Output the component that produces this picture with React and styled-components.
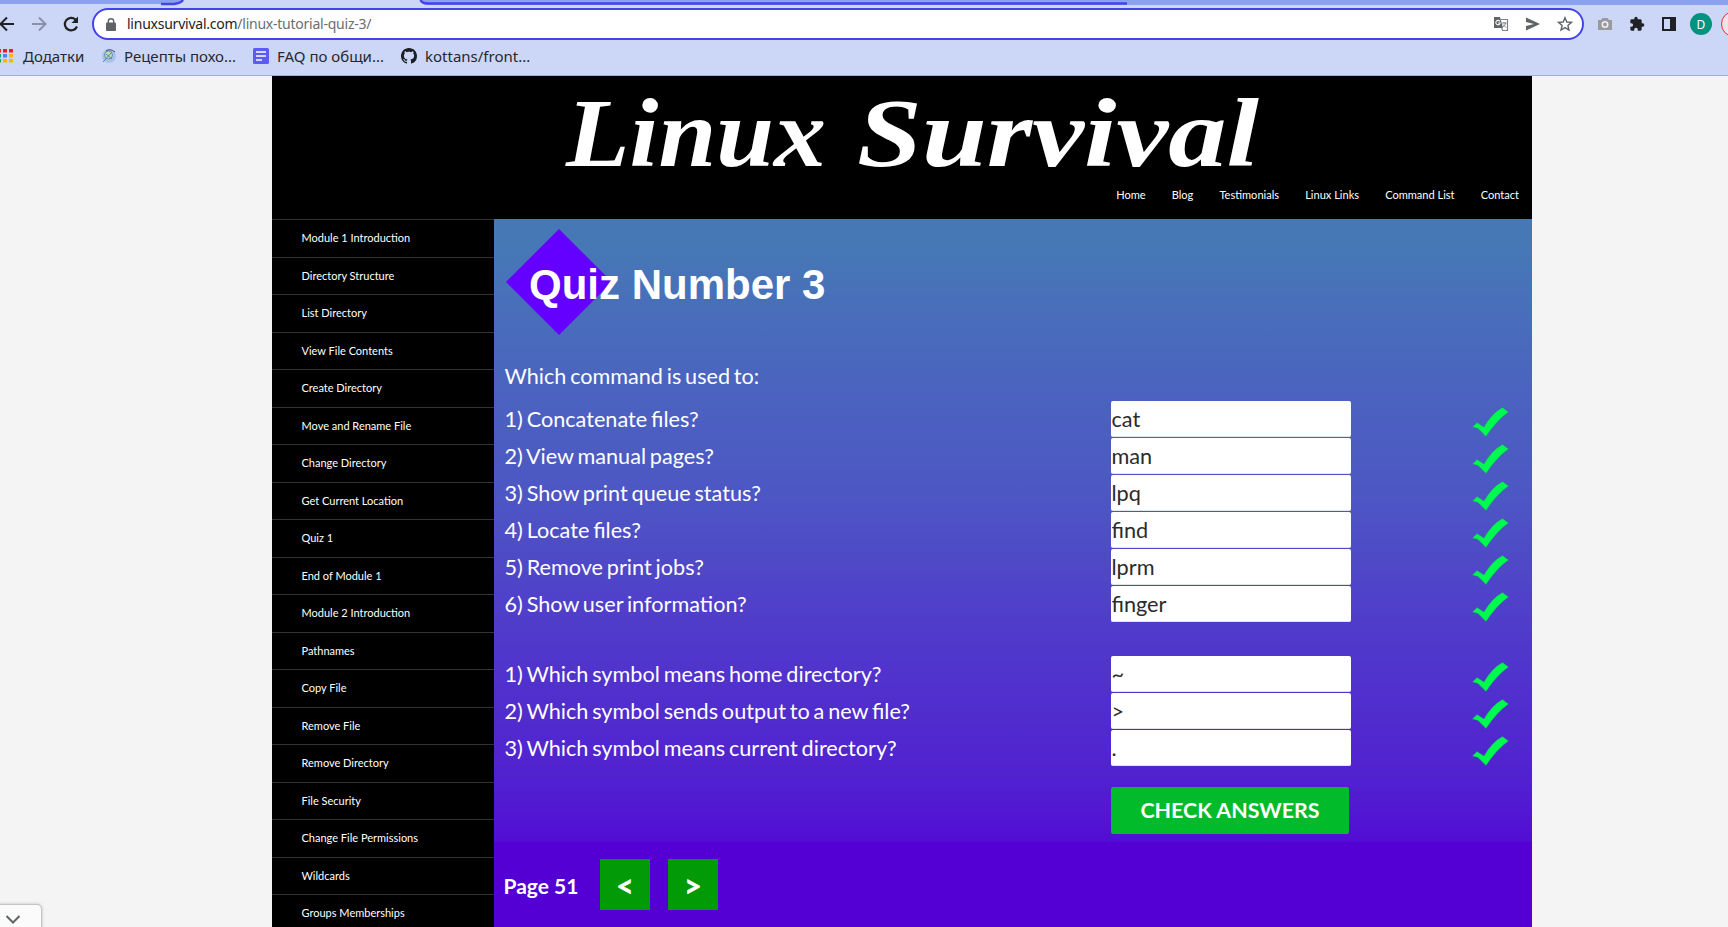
import React from "react";
import styled, { createGlobalStyle } from "styled-components";

const Global = createGlobalStyle`
  * { box-sizing: border-box; }
  html, body { margin: 0; height: 927px; overflow: hidden; background: #f4f4f4; }
  body { font-family: Lato, sans-serif; }
  svg { display: block; flex: none; }
`;
const Screen = styled.div`
  position: relative; width: 1728px; height: 927px; overflow: hidden;
  display: flex; flex-direction: column;
`;
const Chrome = styled.header`
  height: 76px; background: #ccd6f6; border-bottom: 1px solid #a3b0d6; flex: none;
  font-family: "Noto Sans", sans-serif;
`;
const TabStrip = styled.div`
  height: 8px; display: flex; align-items: flex-start;
`;
const Toolbar = styled.div`
  height: 32px; display: flex; align-items: center;
`;
const NavIcons = styled.div`
  width: 94px; display: flex; align-items: center; gap: 14px; margin-left: -2px; flex: none;
`;
const Omnibox = styled.div`
  width: 1492px; height: 32px; border: 2px solid #4543ea; border-radius: 16px; background: #fff;
  display: flex; align-items: center; padding: 0 9px 0 12px; flex: none;
`;
const Url = styled.div`
  margin-left: 11px; flex: 1; font-size: 14px; color: #1f2023; letter-spacing: -0.24px; padding-bottom: 1px;
  span { color: #6b6d72; }
`;
const OmniIcons = styled.div`display: flex; align-items: center; gap: 16px;`;
const Extensions = styled.div`
  display: flex; align-items: center; gap: 16px; margin-left: 13px;
`;
const Avatar = styled.div`
  width: 22px; height: 22px; border-radius: 50%; background: #009380; color: #fff; font-size: 12px;
  display: flex; align-items: center; justify-content: center; margin: 0 -3px; flex: none;
`;
const UpdatePill = styled.div`
  width: 40px; height: 26px; border: 1px solid #e0303a; border-radius: 13px; background: #f3dfe6;
  flex: none; margin-left: -4px;
`;
const Bookmarks = styled.div`
  height: 32px; display: flex; align-items: center; margin-left: -3px;
`;
const Bookmark = styled.div`
  display: flex; align-items: center; gap: ${p => p.$gap}px; width: ${p => p.$w}px; flex: none;
  font-size: 15px; color: #26282d; white-space: nowrap;
`;
const Site = styled.main`
  width: 1260px; margin-left: 272px; height: 851px; background: #000; flex: none;
`;
const Banner = styled.div`
  height: 143px; display: flex; flex-direction: column; justify-content: space-between;
`;
const Logo = styled.svg`margin: 0 0 -14px 280px;`;
const SiteNav = styled.nav`
  display: flex; justify-content: flex-end; gap: 26.1px; padding-right: 13px; height: 31px;
  font-size: 11.05px; line-height: 14px; color: #fff;
`;
const Columns = styled.div`display: flex; height: 708px;`;
const Sidebar = styled.aside`width: 222px; overflow: hidden; flex: none;`;
const SideItem = styled.div`
  height: 37.52px; border-top: 1px solid #333; padding-left: 29.5px; font-size: 11px;
  line-height: 35px; color: #fff;
`;
const Content = styled.section`
  width: 1038px; background: linear-gradient(#4678b6 0, #4678b6 26px, #4a66be 148px, #4d56c4 280px, #5039cb 420px, #5121d0 560px, #520ed3 622px);
`;
const Quiz = styled.div`height: 623px; padding: 10px 0 0 11px;`;
const TitleRow = styled.div`
  height: 106px; display: flex; align-items: center; margin-left: 1px;
`;
const Title = styled.h1`
  margin: 0 0 0 -83px; padding-top: 6px; font: bold 42px/48px "Liberation Sans", sans-serif; color: #fff;
  position: relative;
`;
const Prompt = styled.p`
  margin: 28px 0 0 -0.5px; height: 38px; line-height: 27px; font-size: 21.6px; word-spacing: -1.7px; color: #fff;
`;
const Group = styled.div`display: flex; flex-direction: column; gap: 1px; margin-bottom: 34px;`;
const Row = styled.div`
  height: 36px; display: grid; grid-template-columns: 606px 240px 36px; align-items: center;
  color: #fff;
  svg { margin: 6px 0 0 120.5px; }
`;
const Question = styled.span`
  font-size: 21.65px; word-spacing: -1.7px; line-height: 26px; margin-left: -0.5px;
`;
const Answer = styled.div`
  height: 36px; background: #fff; color: #2b2b2b; border: 1px solid #e3e3ea; border-width: 0 0 1px;
  border-radius: 2px; line-height: 36px; font-size: 21.7px; padding-left: 0.5px;
`;
const CheckButton = styled.button`
  display: block; width: 238px; height: 47px; margin: -13px 0 0 606px; border: 0; border-radius: 2px;
  background: #02bb2a; color: #fff; font: bold 21.4px Lato, sans-serif; padding: 0 0 2px;
`;
const Pager = styled.div`
  height: 85px; background: #5400d4; display: flex; align-items: flex-start; padding: 17px 0 0 9.5px;
  color: #fff; font-weight: bold; font-size: 21px;
`;
const PageLabel = styled.span`width: 96.5px; line-height: 54px;`;
const PageButton = styled.span`
  width: 50px; height: 51px; margin-right: 18px; background: #029a06; text-align: center;
  font-size: 30px; line-height: 52px; -webkit-text-stroke: 0.6px #fff;
`;
const ScrollTab = styled.div`
  position: absolute; left: -4px; top: 904px; width: 46px; height: 30px; background: #fbfbfb;
  border: 1px solid #c4c4c4; border-radius: 5px; box-shadow: 0 0 3px #bbb;
  display: flex; padding: 9px 0 0 8px;
`;

const ArrowIcon = ({ c, flip }) => (
  <svg width="18" height="18" viewBox="0 0 18 18" fill="none" stroke={c} strokeWidth="2"
    transform={flip ? "scale(-1 1)" : undefined}>
    <path d="M16 9H3M9 2.5 2.5 9 9 15.5" />
  </svg>
);
const Check = () => (
  <svg width="37" height="30" viewBox="0 0 37 30">
    <path d="M.5 20 5 15.500 12 20Q20 6 30.500.5L36.500 5Q25 13 14 29.500L6 21.500Z" fill="#00fb50" stroke="#1c9a62" strokeWidth=".5" />
  </svg>
);

const modules = ["Module 1 Introduction", "Directory Structure", "List Directory", "View File Contents",
  "Create Directory", "Move and Rename File", "Change Directory", "Get Current Location", "Quiz 1",
  "End of Module 1", "Module 2 Introduction", "Pathnames", "Copy File", "Remove File", "Remove Directory",
  "File Security", "Change File Permissions", "Wildcards", "Groups Memberships"];
const commands = [["1) Concatenate files?", "cat"], ["2) View manual pages?", "man"],
  ["3) Show print queue status?", "lpq"], ["4) Locate files?", "find"], ["5) Remove print jobs?", "lprm"],
  ["6) Show user information?", "finger"]];
const symbols = [["1) Which symbol means home directory?", "~"],
  ["2) Which symbol sends output to a new file?", ">"], ["3) Which symbol means current directory?", "."]];

const Questions = ({ items }) => (
  <Group>
    {items.map(([q, a]) => <Row key={q}><Question>{q}</Question><Answer>{a}</Answer><Check /></Row>)}
  </Group>
);

export default function App() {
  return (
    <Screen>
      <Global />
      <Chrome>
        <TabStrip>
          <svg width="1728" height="8" viewBox="0 0 1728 8">
            <path d="M0 0H182Q180 4 174 4H0ZM421 0H1728V5H428Q423 5 421 0Z" fill="#8aa2ee" />
            <path d="M161 4H174Q181 3 183 0M420.500 0Q422 3.500 428 3.500H1127" fill="none" stroke="#4543ea" strokeWidth="2.500" />
          </svg>
        </TabStrip>
        <Toolbar>
          <NavIcons>
            <ArrowIcon c="#202124" />
            <ArrowIcon c="#8a90a8" flip />
            <svg width="18" height="18" viewBox="0 0 18 18" fill="none" stroke="#202124" strokeWidth="2.200">
              <path d="M15 11.500A6.300 6.300 0 1 1 13.500 4.500L15 6" /><path d="M16 1.500V8H9.500Z" fill="#202124" stroke="none" />
            </svg>
          </NavIcons>
          <Omnibox>
            <svg width="10" height="13" viewBox="0 0 10 13">
              <rect x="0" y="4.500" width="10" height="8.500" rx="1" fill="#5f6368" />
              <path d="M2.300 5V3.200A2.700 2.500 0 0 1 7.700 3.200V5" fill="none" stroke="#5f6368" strokeWidth="1.400" />
            </svg>
            <Url>linuxsurvival.com<span>/linux-tutorial-quiz-3/</span></Url>
            <OmniIcons>
              <svg width="16" height="16" viewBox="0 0 16 16">
                <path d="M1 1H7L10 12H1Z" fill="#5f6368" />
                <path d="M8 3.500H14.500V14.500H9.500L8.800 12" fill="none" stroke="#7d8085" strokeWidth="1.200" />
                <path d="M9 7H13.500M11.200 6V7M12.800 7Q12 10 9.500 11M10 8.500 13 11.500" stroke="#7d8085" fill="none" />
                <path d="M6.800 5.300A2.200 2.200 0 1 0 7.200 7H5.200" stroke="#fff" fill="none" strokeWidth="1.100" />
              </svg>
              <svg width="16" height="16" viewBox="0 0 16 16"><path d="M1 1.500 15 8 1 14.500V10L9 8 1 6Z" fill="#5f6368" /></svg>
              <svg width="16" height="16" viewBox="0 0 16 16"><path d="M8 1.700 9.800 6 14.500 6.400 10.900 9.500 12 14.100 8 11.600 4 14.100 5.100 9.500 1.500 6.400 6.200 6Z" fill="none" stroke="#5f6368" strokeWidth="1.400" /></svg>
            </OmniIcons>
          </Omnibox>
          <Extensions>
            <svg width="16" height="16" viewBox="0 0 16 16"><path d="M1 4H4L5.500 2H10.500L12 4H15V14H1Z" fill="#9a9a9a" /><circle cx="8" cy="8.500" r="2.700" fill="none" stroke="#eef" strokeWidth="1.600" /></svg>
            <svg width="16" height="16" viewBox="0 0 24 24"><path d="M20.500 11H19V7a2 2 0 0 0-2-2h-4V3.500a2.500 2.500 0 0 0-5 0V5H4a2 2 0 0 0-2 2v3.800h1.500a2.700 2.700 0 0 1 0 5.400H2V20a2 2 0 0 0 2 2h3.800v-1.500a2.700 2.700 0 0 1 5.400 0V22H17a2 2 0 0 0 2-2v-4h1.500a2.500 2.500 0 0 0 0-5Z" fill="#202124" /></svg>
            <svg width="16" height="16" viewBox="0 0 16 16"><path d="M1 1H15V15H1ZM3 3V13H9V3Z" fillRule="evenodd" fill="#202124" /></svg>
            <Avatar>D</Avatar>
            <UpdatePill />
          </Extensions>
        </Toolbar>
        <Bookmarks>
          <Bookmark $w={104} $gap={10}>
            <svg width="16" height="16" viewBox="0 0 16 16">
              {["#f01c24", "#f01c24", "#f01c24", "#0fa958", "#4285f4", "#fbb605", "#0fa958", "#fbb605", "#fbb605"].map((c, i) => (
                <rect key={i} x={(i % 3) * 6} y={1 + Math.floor(i / 3) * 5} width="4" height="3.500" fill={c} />))}
            </svg>
            Додатки
          </Bookmark>
          <Bookmark $w={152} $gap={7}>
            <svg width="16" height="16" viewBox="0 0 16 16"><circle cx="8" cy="8" r="7" fill="#a9c3e8" /><circle cx="7.500" cy="7" r="4" fill="#c6dfa0" stroke="#5a8fcd" /><path d="M5 3Q9 0 14 4" fill="none" stroke="#3d4f78" /><path d="M2 14 11 4M5 6l6 5" stroke="#5b7fb8" /></svg>
            Рецепты похо...
          </Bookmark>
          <Bookmark $w={148} $gap={8}>
            <svg width="16" height="16" viewBox="0 0 16 16"><rect width="16" height="16" rx="1.500" fill="#5b5cf6" /><path d="M3 4H13M3 8H13M3 12H9" stroke="#fff" strokeWidth="1.600" /></svg>
            FAQ по общи...
          </Bookmark>
          <Bookmark $w={160} $gap={8}>
            <svg width="16" height="16" viewBox="0 0 16 16"><path fill="#1b1f23" d="M8 0C3.580 0 0 3.580 0 8c0 3.540 2.290 6.530 5.470 7.590.4.070.55-.17.55-.38 0-.19-.01-.82-.01-1.490-2.010.37-2.530-.49-2.690-.94-.09-.23-.48-.94-.82-1.130-.28-.15-.68-.52-.01-.53.63-.01 1.080.58 1.230.82.72 1.210 1.870.87 2.330.66.07-.52.28-.87.51-1.070-1.780-.2-3.640-.89-3.640-3.950 0-.87.31-1.590.82-2.150-.08-.2-.36-1.020.08-2.120 0 0 .67-.21 2.200.82.64-.18 1.320-.27 2-.27s1.360.09 2 .27c1.530-1.040 2.200-.82 2.200-.82.44 1.100.16 1.920.08 2.120.51.56.82 1.270.82 2.150 0 3.070-1.870 3.750-3.650 3.950.29.25.54.73.54 1.480 0 1.070-.01 1.930-.01 2.200 0 .21.15.46.55.38A8.010 8.010 0 0 0 16 8c0-4.420-3.580-8-8-8Z" /></svg>
            kottans/front...
          </Bookmark>
        </Bookmarks>
      </Chrome>
      <Site>
        <Banner>
          <Logo width="740" height="120" viewBox="552 76 740 120" fill="#fff" fontFamily="Liberation Serif, serif"
            fontWeight="bold" fontStyle="italic" fontSize="98">
            <text x="566" y="166" textLength="260" lengthAdjust="spacingAndGlyphs">Linux</text>
            <text x="857" y="166" textLength="402" lengthAdjust="spacingAndGlyphs">Survival</text>
          </Logo>
          <SiteNav>
            {["Home", "Blog", "Testimonials", "Linux Links", "Command List", "Contact"].map(t => <span key={t}>{t}</span>)}
          </SiteNav>
        </Banner>
        <Columns>
          <Sidebar>{modules.map(m => <SideItem key={m}>{m}</SideItem>)}</Sidebar>
          <Content>
            <Quiz>
              <TitleRow>
                <svg width="106" height="106" viewBox="0 0 106 106"><path d="M53 0 106 53 53 106 0 53Z" fill="#6400ff" /></svg>
                <Title>Quiz Number 3</Title>
              </TitleRow>
              <Prompt>Which command is used to:</Prompt>
              <Questions items={commands} />
              <Questions items={symbols} />
              <CheckButton>CHECK ANSWERS</CheckButton>
            </Quiz>
            <Pager>
              <PageLabel>Page 51</PageLabel>
              <PageButton>&lt;</PageButton>
              <PageButton>&gt;</PageButton>
            </Pager>
          </Content>
        </Columns>
      </Site>
      <ScrollTab>
        <svg width="16" height="12" viewBox="0 0 16 12" fill="none" stroke="#5f6368" strokeWidth="2"><path d="M1.500 2 8 8.500 14.500 2" /></svg>
      </ScrollTab>
    </Screen>
  );
}
